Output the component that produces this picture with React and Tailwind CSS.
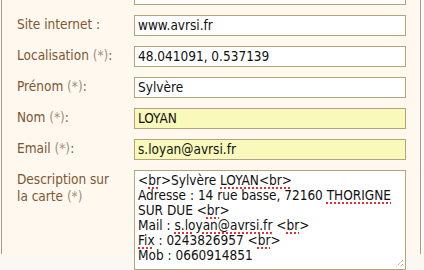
const font = { fontFamily: '"DejaVu Sans Condensed", "DejaVu Sans", sans-serif' };

const rows = [
  { label: "", value: "" },
  { label: "Site internet :", value: "www.avrsi.fr" },
  { label: "Localisation", req: true, value: "48.041091, 0.537139" },
  { label: "Prénom", req: true, value: "Sylvère" },
  { label: "Nom", req: true, value: "LOYAN", yellow: true },
  { label: "Email", req: true, value: "s.loyan@avrsi.fr", yellow: true },
];

// spell-check marks, as the browser draws them under unknown words
const Sq = ({ children }) => (
  <span className="underline decoration-dotted decoration-[#e03030] decoration-[1.5px] underline-offset-[2px]">
    {children}
  </span>
);

const Label = ({ text, req }) => (
  <div className="w-[117px] shrink-0 pt-[1px] text-[13.5px] leading-[17px] text-[#7f5631]">
    {text}
    {req && (
      <>
        {" "}
        <span className="text-[#a0907c]">(*)</span>:
      </>
    )}
  </div>
);

const App = () => {
  return (
    <div className="w-[424px] h-[270px] overflow-hidden bg-[#fbf8f4]" style={font}>
      <div className="ml-[1px] w-[420px] h-full border-x border-[#a29c95] bg-[#fef8ef]">
        <div className="flex flex-col gap-[10px] pl-[15px] -mt-[16px]">
          {rows.map((r, i) => (
            <div key={i} className="flex items-start">
              <Label text={r.label} req={r.req} />
              <div
                className={`w-[272px] h-[21px] border border-[#b3a47b] pl-[3px] text-[13.5px] leading-[19px] text-[#111] ${
                  r.yellow ? "bg-[#f9f9bb]" : "bg-white"
                }`}
              >
                {r.value}
              </div>
            </div>
          ))}
          <div className="flex items-start">
            <div className="w-[117px] shrink-0 pt-[1px] text-[13.5px] leading-[17px] text-[#7f5631]">
              Description sur
              <br />
              la carte <span className="text-[#a0907c]">(*)</span>
            </div>
            <div className="relative w-[272px] h-[100px] border border-[#b3a47b] bg-white pl-[3px] pt-[2px] text-[13.5px] leading-[15px] text-[#111]">
              <div>
                &lt;<Sq>br</Sq>&gt;Sylvère <Sq>LOYAN&lt;br&gt;</Sq>
              </div>
              <div>
                Adresse : 14 rue basse, 72160 <Sq>THORIGNE</Sq>
              </div>
              <div>
                SUR DUE &lt;<Sq>br</Sq>&gt;
              </div>
              <div>
                Mail : <Sq>s.loyan@avrsi.fr</Sq> &lt;<Sq>br</Sq>&gt;
              </div>
              <div>
                <Sq>Fix</Sq> : 0243826957 &lt;<Sq>br</Sq>&gt;
              </div>
              <div>Mob : 0660914851</div>
              <svg
                className="absolute right-[1px] bottom-[1px]"
                width="10"
                height="10"
                viewBox="0 0 10 10"
              >
                <path d="M9 2 L2 9 M9 6 L6 9" stroke="#888" strokeWidth="1" strokeDasharray="1 1" />
              </svg>
            </div>
          </div>
        </div>
      </div>
    </div>
  );
};

export default App;
